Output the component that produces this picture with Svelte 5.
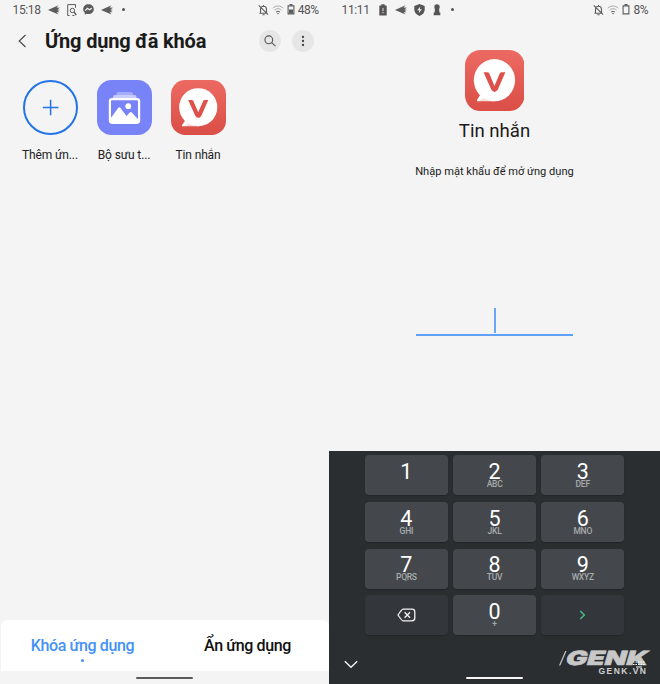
<script>
  const apps = [
    { name: 'Thêm ứn...', kind: 'add' },
    { name: 'Bộ sưu t...', kind: 'gallery' },
    { name: 'Tin nhắn', kind: 'message' }
  ];
  const keys = [
    ['1', ''], ['2', 'ABC'], ['3', 'DEF'],
    ['4', 'GHI'], ['5', 'JKL'], ['6', 'MNO'],
    ['7', 'PQRS'], ['8', 'TUV'], ['9', 'WXYZ'],
    ['back', ''], ['0', '+'], ['go', '']
  ];
</script>

{#snippet plane()}
  <svg width="12" height="12" viewBox="0 0 12 12" fill="#5c5c5c"><path d="M0 6 10.500 1.200 8.600 3.500 12 3.700 9.500 5.300 12 6 9.500 6.700 11.500 8.300 8.600 8.300 10.500 10.600Z" /></svg>
{/snippet}

{#snippet bell()}
  <svg width="11" height="12" viewBox="0 0 11 12" fill="none" stroke="#5c5c5c" stroke-width="1.100"><path d="M1.400 9.300h8M2.500 9V5.200C2.500 1.200 8.500 1.200 8.500 5.200V9M5.500 1v1.300M4.400 10.800h2.200M.7 1.400l9.400 9.200" /></svg>
{/snippet}

{#snippet wifi()}
  <svg width="12" height="10" viewBox="0 0 12 10" fill="none" stroke-width="1"><path d="M.8 3.200C3.600.3 8.400.3 11.200 3.200M2.500 5.200c2-2 5-2 7 0" stroke="#a9a9a9" /><path d="M4 7.100c1.300-1 2.700-1 4 0" stroke="#666" /><circle cx="6" cy="8.500" r=".8" fill="#666" /></svg>
{/snippet}

{#snippet battery(level)}
  <svg width="8" height="11" viewBox="0 0 8 11"><path d="M1.100 1.900h5.800v8H1.100Z" fill="none" stroke="#5c5c5c" stroke-width="1.100" /><path d="M2.500 0h3v1.500h-3z" fill="#5c5c5c" /><rect x="2" y={9.5 - level} width="4" height={level} fill="#5c5c5c" /></svg>
{/snippet}

{#snippet message()}
  <svg class="fill" viewBox="0 0 60 60" preserveAspectRatio="none">
    <defs><linearGradient id="red" x1="0" y1="0" x2="0" y2="1"><stop offset="0" stop-color="#ec6a62" /><stop offset="1" stop-color="#da4e46" /></linearGradient></defs>
    <rect width="60" height="60" rx="15.500" fill="url(#red)" />
    <path d="M16 43.500 12.300 49c-.6 1 0 1.500 1 1.500H30l5-8Z" fill="#fbdcd9" />
    <path d="M16 43.500 12.300 49c-.6 1 0 1.500 1 1.500 2.600-.4 5-2 5.800-4.700Z" fill="#fff" />
    <circle cx="29.700" cy="29.700" r="20.800" fill="#fff" />
    <path d="M18.700 21.800H22.500q1.500 0 2 1.300l5.200 12.200 5.300-12.200q.5-1.300 2-1.300h3.700L33 39.200q-3.200 4.200-6.400 0Z" fill="#de514a" />
  </svg>
{/snippet}

<main>
  <section class="left">
    <div class="status">
      <span class="time">15:18</span>
      <div class="notes">
        {@render plane()}
        <svg width="10" height="12" viewBox="0 0 10 12" fill="none" stroke="#5c5c5c" stroke-width="1"><path d="M2.500 11.500H.7V.6h7.800v3.200M5.400 11.500h2" /><circle cx="5.400" cy="6.500" r="2.200" /><path d="m7 8 2.300 3" stroke-width="1.300" /></svg>
        <svg width="11" height="11" viewBox="0 0 11 11"><path d="M5.500.3C2.400.3.2 2.400.2 5.200c0 1.500.6 2.700 1.600 3.600v1.900l1.700-1c3.900 1.100 7.300-1 7.300-4.500C10.800 2.400 8.600.3 5.500.3Z" fill="#5c5c5c" /><path d="m2.200 6.700 2.300-2.400 2 1.500 2.300-1.600" fill="none" stroke="#f4f4f4" stroke-width="1.200" /></svg>
        {@render plane()}
        <i class="dot"></i>
      </div>
      <div class="sys">{@render bell()}{@render wifi()}{@render battery(4)}<span>48%</span></div>
    </div>

    <header>
      <svg class="chev" width="9" height="14" viewBox="0 0 9 14"><path d="M7.500 1 1.200 7l6.300 6" fill="none" stroke="#4c4c4c" stroke-width="1.200" /></svg>
      <h1>Ứng dụng đã khóa</h1>
      <button aria-label="search"><svg width="12" height="12" viewBox="0 0 12 12" fill="none" stroke="#555" stroke-width="1.100"><circle cx="4.800" cy="4.800" r="3.900" /><path d="m7.700 7.700 3.800 3.500" /></svg></button>
      <button aria-label="more"><svg width="4" height="12" viewBox="0 0 4 12" fill="#444"><circle cx="2" cy="2" r="1.150" /><circle cx="2" cy="6" r="1.150" /><circle cx="2" cy="10" r="1.150" /></svg></button>
    </header>

    <div class="apps">
      {#each apps as app}
        <div class="app">
          <div class="icon">
            {#if app.kind === 'add'}
              <svg class="fill" viewBox="0 0 55 55" fill="none" stroke="#2374e8"><circle cx="27.500" cy="27.500" r="26.500" stroke-width="2" /><path d="M19.800 27.500h15.600M27.600 19.700v15.600" stroke-width="1.500" /></svg>
            {:else if app.kind === 'gallery'}
              <svg class="fill" viewBox="0 0 55 55">
                <rect width="55" height="55" rx="14.500" fill="#7883f7" />
                <rect x="19.500" y="12" width="16.500" height="8" rx="2" fill="#a5adfb" />
                <rect x="16" y="15" width="23.500" height="6" rx="2" fill="#c9cdfd" />
                <rect x="12.900" y="19.200" width="29.200" height="23.600" rx="2.200" fill="#7883f7" stroke="#fff" stroke-width="2.200" />
                <path d="m13.500 38.500 7.800-10.700q1-1.300 2 0l6.200 8.200 3.300-3.600q1-1 2 0l6.700 7.300V42H13.500Z" fill="#fff" />
                <circle cx="31.300" cy="26.200" r="2.900" fill="#fff" />
              </svg>
            {:else}
              {@render message()}
            {/if}
          </div>
          <span>{app.name}</span>
        </div>
      {/each}
    </div>

    <nav>
      <div class="tab active">Khóa ứng dụng<i></i></div>
      <div class="tab">Ẩn ứng dụng</div>
    </nav>
    <div class="gesture"><i></i></div>
  </section>

  <section class="right">
    <div class="status">
      <span class="time">11:11</span>
      <div class="notes">
        <svg width="8" height="12" viewBox="0 0 8 12"><path d="M2.300.3h3.400v1.200h1.500q.5 0 .5.500v9q0 .6-.6.6H.9q-.6 0-.6-.6V2q0-.5.500-.5h1.500Z" fill="#555" /><path d="M4 3.900v3.300M4 8v1.200" stroke="#ddd" stroke-width="1" /></svg>
        {@render plane()}
        <svg width="11" height="12" viewBox="0 0 11 12"><path d="M5.500 0 10.700 2v3.600c0 3-2 5.300-5.200 6.400C2.300 10.900.3 8.600.3 5.600V2Z" fill="#555" /><path d="M6.300 2.500 3.200 6.300h2l-.5 3 3.200-4.100H5.800Z" fill="#eee" /></svg>
        <svg width="8" height="12" viewBox="0 0 8 12" fill="#555"><circle cx="4" cy="2.900" r="2.700" /><path d="M2 4h4l.4 4.600h.9v2.700H.7V8.600h.9Z" /></svg>
        <i class="dot"></i>
      </div>
      <div class="sys">{@render bell()}{@render wifi()}{@render battery(0)}<span>8%</span></div>
    </div>

    <div class="lock">
      <div class="big">{@render message()}</div>
      <h2>Tin nhắn</h2>
      <p>Nhập mật khẩu để mở ứng dụng</p>
      <div class="field"><i></i></div>
    </div>

    <div class="keyboard">
      <div class="keys">
        {#each keys as [key, letters]}
          <div class="key" class:dark={key === 'back' || key === 'go'}>
            {#if key === 'back'}
              <svg width="19" height="14" viewBox="0 0 19 14" fill="none" stroke="#f2f3f3" stroke-width="1.300"><path d="M6 1.200h9q2.800 0 2.800 2.800v6q0 2.800-2.800 2.800H6Q4.900 12.800 1 7 4.900 1.200 6 1.200ZM7.600 4.200l5.400 5.600M13 4.200 7.600 9.800" /></svg>
            {:else if key === 'go'}
              <svg width="7" height="10" viewBox="0 0 7 10"><path d="m1.300 1 4 4-4 4" fill="none" stroke="#48bd83" stroke-width="1.500" /></svg>
            {:else}
              <b>{key}</b>{#if letters}<small>{letters}</small>{/if}
            {/if}
          </div>
        {/each}
      </div>
      <div class="bottom">
        <svg class="down" width="14" height="9" viewBox="0 0 14 9"><path d="m.8 1.200 6.200 6 6.200-6" fill="none" stroke="#f2f3f3" stroke-width="1.400" /></svg>
        <i class="bar"></i>
        <svg class="logo" width="108" height="34" viewBox="-8 -4 108 34">
          <path d="M0 15.500 6.200 1h1.300L1.300 15.500Z" fill="#c8c8c8" />
          <text transform="translate(5.500 15) skewX(-16)" textLength="82" lengthAdjust="spacingAndGlyphs" class="genk">GENK</text>
          <g stroke="#fff" stroke-width="1.200" stroke-dasharray="1.500 1"><path d="M74 12h12M74 14.500h12" /></g><path d="M77 17h6" stroke="#fff" />
          <text x="39.500" y="24.300" textLength="47.500" class="vn">GENK.VN</text>
        </svg>
      </div>
    </div>
  </section>
</main>

<style>
  :global(body) { margin: 0; }
  main { display: flex; width: 660px; height: 684px; overflow: hidden; background: #f4f4f4; font-family: Roboto, "Noto Sans", sans-serif; color: #1b1b1b; }
  section { display: flex; flex-direction: column; height: 684px; }
  .left { width: 329px; }
  .right { width: 331px; }
  svg { display: block; flex: none; }
  .fill { width: 100%; height: 100%; }
  .status { display: flex; align-items: center; height: 19px; padding: 0 10.500px 0 12.500px; font-size: 12px; color: #555; box-sizing: border-box; flex: none; }
  .right .status { padding-right: 12px; }
  .time { width: 35.500px; letter-spacing: -0.350px; }
  .notes { display: flex; align-items: center; gap: 6.500px; }
  .right .notes { gap: 7.500px; padding-left: 2px; }
  .dot { width: 3px; height: 3px; border-radius: 50%; background: #555; margin-left: 3px; }
  .sys { display: flex; align-items: center; gap: 3px; margin-left: auto; letter-spacing: -.500px; }
  header { display: flex; align-items: center; height: 44px; padding: 0 15.500px 0 18px; flex: none; }
  h1 { margin: 0 auto 0 18px; font-size: 20px; line-height: 24px; font-weight: 700; letter-spacing: -.180px; white-space: nowrap; }
  button { display: flex; align-items: center; justify-content: center; width: 22px; height: 22px; border: 0; border-radius: 50%; padding: 0; background: #e6e6e6; }
  button + button { margin-left: 11px; }
  .apps { display: flex; gap: 19px; padding: 17px 0 0 22.500px; }
  .app { display: flex; flex-direction: column; align-items: center; width: 55px; }
  .icon { width: 55px; height: 55px; }
  .app span { margin-top: 12px; font-size: 12px; line-height: 16px; letter-spacing: -.130px; white-space: nowrap; color: #222; }
  nav { display: flex; height: 51px; margin: auto 0 0 1px; border-radius: 6px 6px 0 0; background: #fff; }
  .tab { display: flex; flex-direction: column; align-items: center; flex: 1; padding-top: 16px; font-size: 16px; line-height: 20px; letter-spacing: -.380px; font-weight: 500; color: #111; }
  .tab + .tab { padding-left: 2px; }
  .active { color: #4492f5; }
  .tab i { width: 3px; height: 3px; border-radius: 50%; background: #4492f5; margin-top: 3px; }
  .gesture { height: 13px; display: flex; justify-content: center; }
  .gesture i { width: 57px; height: 2px; margin-top: 6px; background: #5b5b5b; border-radius: 1px; }
  .lock { display: flex; flex-direction: column; align-items: center; padding-top: 31px; }
  .big { width: 59.500px; height: 61px; }
  h2 { margin: 9px 0 0; font-size: 18.600px; line-height: 22px; font-weight: 400; }
  p { margin: 22px 0 0; font-size: 11.100px; line-height: 16px; white-space: nowrap; }
  .field { width: 157px; height: 26px; margin-top: 128px; border-bottom: 2px solid #60a0f7; display: flex; justify-content: center; }
  .field i { width: 2px; height: 25px; background: #69a6f7; }
  .keyboard { display: flex; flex-direction: column; height: 233px; margin-top: auto; background: #2a2e31; }
  .keys { display: grid; grid-template-columns: repeat(3, 82.700px); grid-auto-rows: 40px; gap: 6.700px 5.500px; padding: 4.400px 0 0 36px; }
  .key { display: flex; flex-direction: column; align-items: center; border-radius: 4px; background: #44484c; box-shadow: 0 1px 1px #222629; }
  .dark { background: #33373b; justify-content: center; }
  b { margin-top: 7.500px; font-size: 21.500px; line-height: 17px; font-weight: 400; color: #fff; }
  small { font-size: 8.500px; line-height: 9px; letter-spacing: -.250px; color: #a8abad; font-weight: 500; }
  .bottom { display: flex; flex: 1; padding-left: 15px; }
  .down { margin-top: 25px; }
  .bar { width: 57px; height: 2px; margin: 41.500px 0 0 108px; background: #f5f5f5; border-radius: 1px; }
  .logo { margin: 11px 0 0 28px; }
  .genk { font: 900 19.500px Inter, sans-serif; fill: #c8c8c8; stroke: #c8c8c8; stroke-width: .6px; }
  .vn { font: 700 8.500px "Liberation Sans", sans-serif; fill: #d0d0d0; }
</style>
